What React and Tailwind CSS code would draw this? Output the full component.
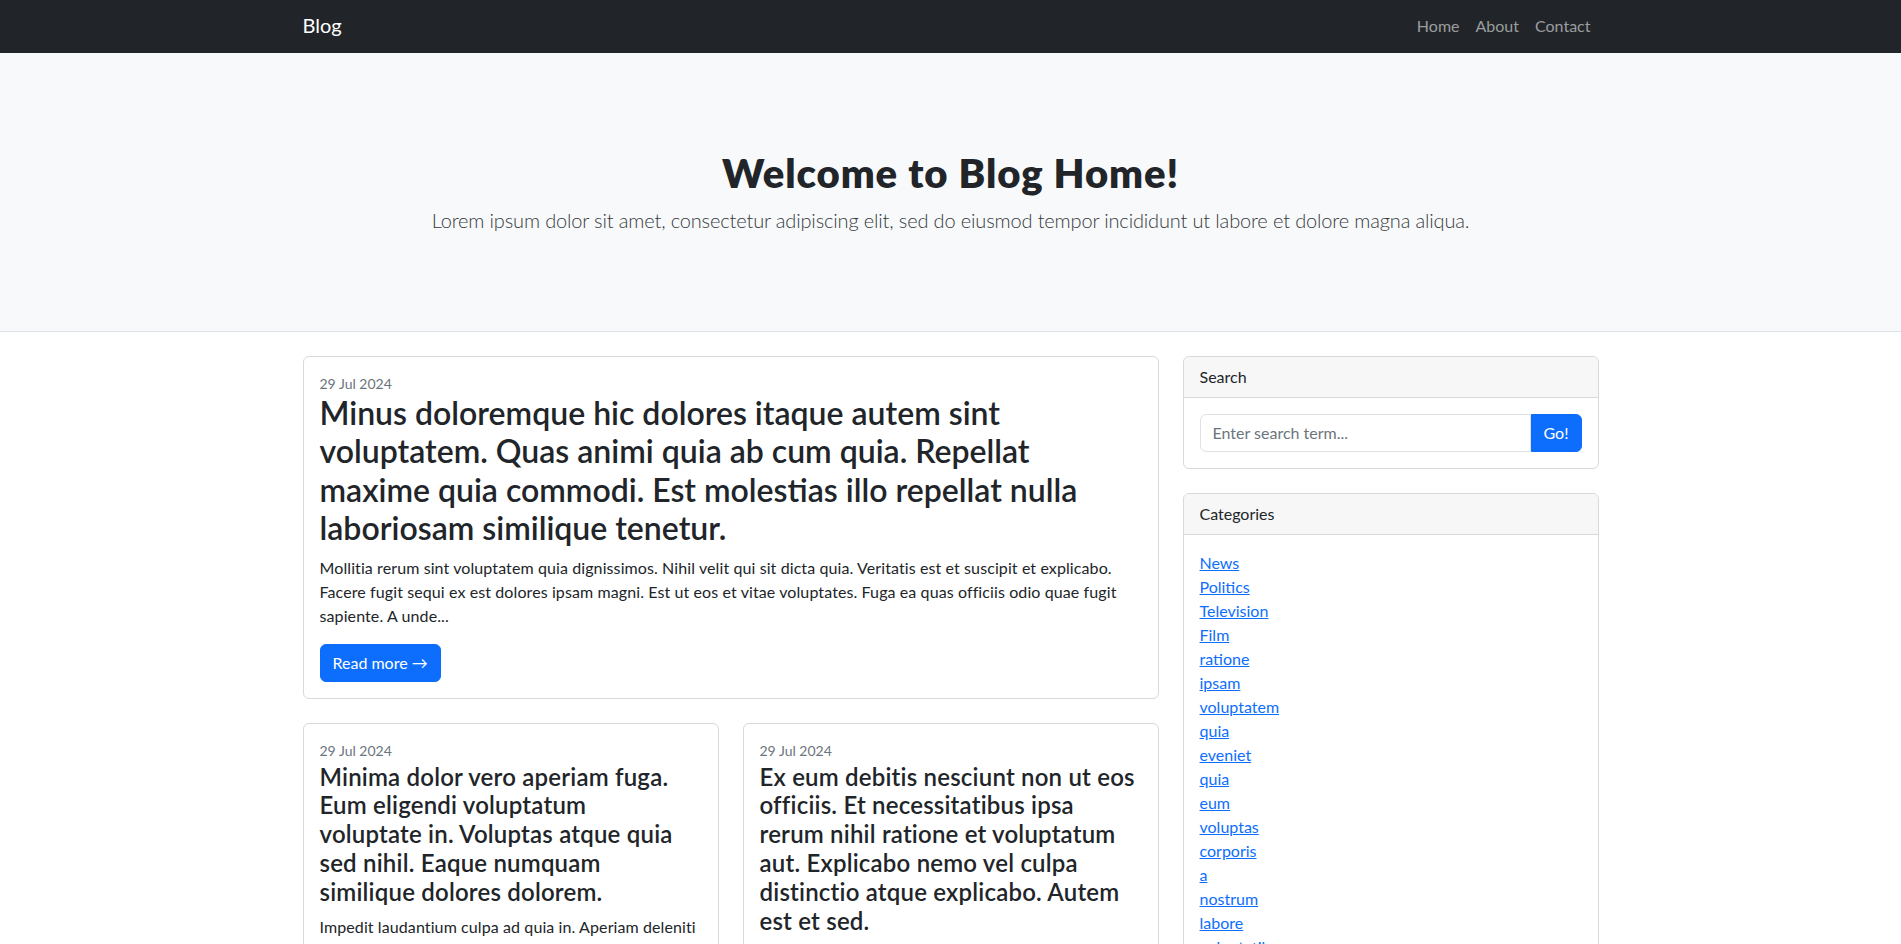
const categories = [
  "News", "Politics", "Television", "Film", "ratione", "ipsam", "voluptatem", "quia",
  "eveniet", "quia", "eum", "voluptas", "corporis", "a", "nostrum", "labore",
  "voluptatibus", "natus", "dolor", "omnis",
];

const posts = [
  {
    title: "Minima dolor vero aperiam fuga. Eum eligendi voluptatum voluptate\u00a0in. Voluptas atque quia sed nihil. Eaque numquam similique dolores dolorem.",
    text: "Impedit laudantium culpa ad quia in. Aperiam deleniti officia quo nam. Illum qui commodi dolorum ad est. Voluptas sunt odit...",
  },
  {
    title: "Ex eum debitis nesciunt non ut eos officiis. Et necessitatibus ipsa rerum nihil ratione et voluptatum aut. Explicabo nemo vel culpa distinctio atque explicabo. Autem est et sed.",
    text: "Quia et qui rerum omnis. Sint nam dolorem dolor quos ut. Est vero perferendis voluptate aut dolorem ipsam. Similique...",
  },
];

const Card = ({ children, className = "" }) => (
  <div className={"border border-[#d9d9da] rounded-[6px] bg-white " + className}>{children}</div>
);

const ReadMore = () => (
  <a href="#" className="inline-block bg-[#0d6efd] border border-[#0d6efd] text-white rounded-[6px] px-3 py-[6px] leading-6 no-underline">
    Read more →
  </a>
);

export default function App() {
  return (
    <div className="min-h-screen bg-white text-[#212529] text-base leading-6 font-['Lato','Liberation_Sans',sans-serif]">
      <nav className="bg-[#212529] h-[53px]">
        <div className="w-[1320px] mx-auto px-3 h-full flex items-center justify-between">
          <a href="#" className="text-white text-xl leading-[30px] -mt-1">Blog</a>
          <ul className="flex -mt-[2px]">
            {["Home", "About", "Contact"].map((l) => (
              <li key={l}>
                <a href="#" className="block px-2 py-2 text-[#9b9d9f]">{l}</a>
              </li>
            ))}
          </ul>
        </div>
      </nav>

      <header className="bg-[#f8f9fa] border-b border-[#dee2e6] py-12 mb-6">
        <div className="my-12 text-center">
          <h1 className="text-[40px] leading-[48px] font-extrabold tracking-[0.9px] mb-2">Welcome to Blog Home!</h1>
          <p className="text-xl leading-[30px] font-light tracking-[-0.15px] text-[#363a3e]">
            Lorem ipsum dolor sit amet, consectetur adipiscing elit, sed do eiusmod tempor incididunt ut labore et dolore magna aliqua.
          </p>
        </div>
      </header>

      <main className="w-[1320px] mx-auto px-3 grid grid-cols-[856px_416px] gap-6 items-start">
        <div className="flex flex-col gap-6">
          <Card>
            <div className="p-4">
              <div className="text-sm leading-[21px] text-[#6c757d]">29 Jul 2024</div>
              <h2 className="text-[32px] leading-[38.4px] font-semibold mb-2">
                Minus doloremque hic dolores itaque autem sint voluptatem. Quas animi quia ab cum quia. Repellat maxime quia commodi. Est molestias illo repellat nulla laboriosam similique tenetur.
              </h2>
              <p className="mb-4 tracking-[0.1px]">
                Mollitia rerum sint voluptatem quia dignissimos. Nihil velit qui sit dicta quia. Veritatis est et suscipit et explicabo. Facere fugit sequi ex est dolores ipsam magni. Est ut eos et vitae voluptates. Fuga ea quas officiis odio quae fugit sapiente. A unde...
              </p>
              <ReadMore />
            </div>
          </Card>

          <div className="grid grid-cols-2 gap-6">
            {posts.map((p, i) => (
              <Card key={i}>
                <div className="p-4">
                  <div className="text-sm leading-[21px] text-[#6c757d]">29 Jul 2024</div>
                  <h2 className="text-2xl leading-[28.8px] font-semibold tracking-[0.2px] mb-2 pt-[2px] -mb-[0px]">{p.title}</h2>
                  <p className="mb-4 tracking-[0.1px]">{p.text}</p>
                  <ReadMore />
                </div>
              </Card>
            ))}
          </div>
        </div>

        <aside className="flex flex-col gap-6">
          <Card>
            <div className="bg-[#f7f7f7] border-b border-[#d9d9da] px-4 py-2 rounded-t-[6px]">Search</div>
            <div className="p-4 flex">
              <input
                type="text"
                placeholder="Enter search term..."
                className="flex-1 min-w-0 border border-[#dee2e6] rounded-l-[6px] px-3 py-[6px] leading-6 placeholder:text-[#6c757d] outline-none"
              />
              <button className="bg-[#0d6efd] border border-[#0d6efd] text-white rounded-r-[6px] px-3 py-[6px] leading-6">Go!</button>
            </div>
          </Card>
          <Card>
            <div className="bg-[#f7f7f7] border-b border-[#d9d9da] px-4 py-2 rounded-t-[6px]">Categories</div>
            <div className="p-4">
              <ul>
                {categories.map((c, i) => (
                  <li key={i}>
                    <a href="#" className="text-[#0d6efd] underline">{c}</a>
                  </li>
                ))}
              </ul>
            </div>
          </Card>
        </aside>
      </main>
    </div>
  );
}
